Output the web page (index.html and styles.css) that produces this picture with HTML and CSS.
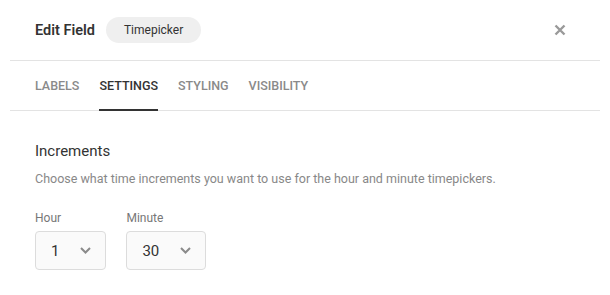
FILE: index.html
```
<!DOCTYPE html>
<html lang="en">
<head>
<meta charset="utf-8">
<title>Edit Field</title>
<link rel="stylesheet" href="styles.css">
</head>
<body>
<div class="panel">
  <header class="header">
    <h1 class="title">Edit Field</h1>
    <span class="pill">Timepicker</span>
    <button class="close" aria-label="Close">
      <svg width="12" height="12" viewBox="0 0 12 12"><path d="M1.5 1.5 L10.5 10.5 M10.5 1.5 L1.5 10.5" stroke="#9a9a9a" stroke-width="2.4" stroke-linecap="butt" fill="none"/></svg>
    </button>
  </header>
  <nav class="tabs">
    <a class="tab">LABELS</a>
    <a class="tab active">SETTINGS</a>
    <a class="tab">STYLING</a>
    <a class="tab">VISIBILITY</a>
  </nav>
  <section class="content">
    <h2 class="heading">Increments</h2>
    <p class="desc">Choose what time increments you want to use for the hour and minute timepickers.</p>
    <div class="fields">
      <div class="field">
        <label class="label">Hour</label>
        <div class="select">
          <span class="value">1</span>
          <svg class="chev" width="11" height="7" viewBox="0 0 11 7"><path d="M1 1 L5.5 5.5 L10 1" stroke="#8a8a8a" stroke-width="2" fill="none"/></svg>
        </div>
      </div>
      <div class="field">
        <label class="label">Minute</label>
        <div class="select">
          <span class="value">30</span>
          <svg class="chev" width="11" height="7" viewBox="0 0 11 7"><path d="M1 1 L5.5 5.5 L10 1" stroke="#8a8a8a" stroke-width="2" fill="none"/></svg>
        </div>
      </div>
    </div>
  </section>
</div>
</body>
</html>
```
FILE: styles.css
```
* { box-sizing: border-box; }
html, body { margin: 0; padding: 0; background: #fff; }
body { font-family: Roboto, "Liberation Sans", sans-serif; color: #333; }

.panel { margin: 0 10px; }

.header {
  height: 61px;
  display: flex;
  align-items: center;
  padding: 0 34px 0 25px;
  border-bottom: 1px solid #e3e3e3;
}
.title {
  margin: 0;
  font-size: 14.5px;
  font-weight: 600;
  color: #333;
}
.pill {
  margin-left: 11px;
  height: 26px;
  padding: 0 18px;
  border-radius: 13px;
  background: #efefef;
  font-size: 12px;
  line-height: 26px;
  color: #333;
}
.close {
  margin-left: auto;
  border: 0;
  background: none;
  padding: 0;
  width: 12px;
  height: 12px;
  display: flex;
}

.tabs {
  display: flex;
  gap: 20px;
  padding: 0 25px;
  height: 50px;
  border-bottom: 1px solid #e3e3e3;
}
.tab {
  display: flex;
  align-items: center;
  padding-top: 1px;
  font-size: 12.5px;
  font-weight: 500;
  color: #8a8a8a;
  border-bottom: 2px solid transparent;
  margin-bottom: -1px;
}
.tab.active {
  color: #333;
  border-bottom-color: #333;
}

.content { padding: 30px 25px 0; }
.heading {
  margin: 0;
  font-size: 15px;
  font-weight: 400;
  line-height: 20px;
  color: #333;
}
.desc {
  margin: 8px 0 0;
  font-size: 12.5px;
  line-height: 19px;
  color: #888;
}
.fields {
  display: flex;
  gap: 20px;
  margin-top: 22px;
}
.field { display: flex; flex-direction: column; }
.label {
  font-size: 12px;
  line-height: 16px;
  color: #777;
  margin-bottom: 5px;
}
.select {
  height: 39px;
  display: flex;
  align-items: center;
  gap: 21px;
  padding: 0 14px 0 15px;
  border: 1px solid #dcdcdc;
  border-radius: 4px;
  background: #fafafa;
}
.value { font-size: 15px; color: #333; }
.chev { display: block; }
```
